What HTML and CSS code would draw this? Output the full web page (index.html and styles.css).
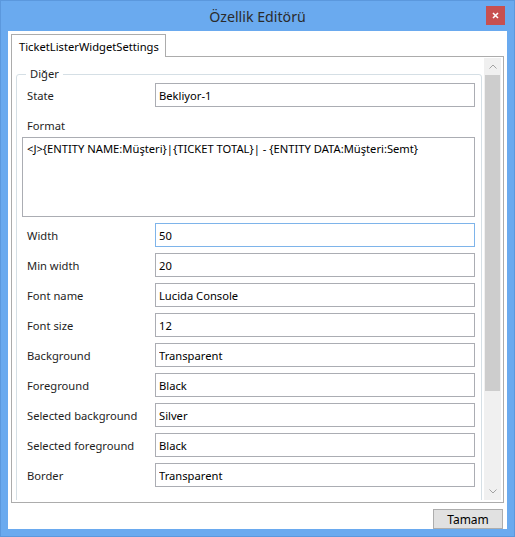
FILE: index.html
```html
<!DOCTYPE html>
<html lang="tr">

<head>
    <meta charset="UTF-8">
    <title>Özellik Editörü</title>
    <link rel="stylesheet" href="styles.css">
</head>

<body>
    <div class="window">
        <div class="titlebar">
            <span></span>
            <span class="title">Özellik Editörü</span>
            <button class="close">
                <svg width="7" height="7" viewBox="0 0 7 7"><path d="M1 1 L6 6 M6 1 L1 6" stroke="#fff" stroke-width="1.6" /></svg>
            </button>
        </div>

        <div class="client">
            <!-- Tabs -->
            <div class="tabs">
                <div class="tab active">TicketListerWidgetSettings</div>
            </div>

            <div class="tab-panel">
                <div class="scroll-content">
                    <fieldset class="group">
                        <legend>Diğer</legend>

                        <label>State</label>
                        <input type="text" value="Bekliyor-1">

                        <label class="wide">Format</label>
                        <textarea class="wide">&lt;J&gt;{ENTITY NAME:Müşteri}|{TICKET TOTAL}| - {ENTITY DATA:Müşteri:Semt}</textarea>

                        <label>Width</label>
                        <input type="text" value="50" class="focused">

                        <label>Min width</label>
                        <input type="text" value="20">

                        <label>Font name</label>
                        <input type="text" value="Lucida Console">

                        <label>Font size</label>
                        <input type="text" value="12">

                        <label>Background</label>
                        <input type="text" value="Transparent">

                        <label>Foreground</label>
                        <input type="text" value="Black">

                        <label>Selected background</label>
                        <input type="text" value="Silver">

                        <label>Selected foreground</label>
                        <input type="text" value="Black">

                        <label>Border</label>
                        <input type="text" value="Transparent">
                    </fieldset>
                </div>

                <!-- Vertical scrollbar -->
                <div class="scrollbar">
                    <div class="arrow">
                        <svg width="8" height="5" viewBox="0 0 8 5"><path d="M0.5 4.5 L4 1 L7.5 4.5" fill="none" stroke="#a2a2a2" /></svg>
                    </div>
                    <div class="track">
                        <div class="thumb"></div>
                    </div>
                    <div class="arrow">
                        <svg width="8" height="5" viewBox="0 0 8 5"><path d="M0.5 0.5 L4 4 L7.5 0.5" fill="none" stroke="#a2a2a2" /></svg>
                    </div>
                </div>
            </div>

            <div class="footer">
                <button class="btn">Tamam</button>
            </div>
        </div>
    </div>
</body>

</html>
```

FILE: styles.css
```css
body {
    margin: 0;
    font-family: "Segoe UI", "Noto Sans", sans-serif;
    font-size: 11.2px;
    color: #1e1e1e;
}

.window {
    width: 515px;
    height: 537px;
    box-sizing: border-box;
    background: #6aaaef;
    border: 1px solid #5b98dd;
    padding: 0 7px 7px;
    display: flex;
    flex-direction: column;
}

.titlebar {
    height: 30px;
    display: grid;
    grid-template-columns: 1fr auto 1fr;
    align-items: center;
}

.title {
    font-size: 14.2px;
    color: #2b2b2b;
}

.close {
    justify-self: end;
    align-self: start;
    width: 19px;
    height: 19px;
    margin: 5px 2px 0 0;
    padding: 0;
    border: none;
    background: #c75050;
    display: flex;
    align-items: center;
    justify-content: center;
}

.client {
    flex: 1;
    background: #fff;
    display: flex;
    flex-direction: column;
    padding: 3px 3px 0 3px;
}

.tabs {
    height: 22px;
    display: flex;
}

.tab {
    position: relative;
    z-index: 1;
    height: 22px;
    padding: 0 6px 0 7px;
    line-height: 23px;
    border: 1px solid #acacac;
    border-bottom: none;
    background: #fff;
    color: #000;
}

.tab-panel {
    height: 442px;
    border: 1px solid #acacac;
    padding: 1px 2px 2px 2px;
    display: flex;
    overflow: hidden;
}

.scroll-content {
    flex: 1;
    overflow: hidden;
    padding: 8px 2px 0 2px;
}

.group {
    margin: 0;
    border: 1px solid #d5dfe5;
    border-radius: 3px;
    padding: 1px 6px 40px 5px;
    display: grid;
    grid-template-columns: 133px 1fr;
    row-gap: 6px;
}

.group legend {
    padding: 0 4px;
    margin-left: 4px;
    line-height: 16px;
}

.group label {
    height: 24px;
    line-height: 26px;
    padding-left: 5px;
}

.group .wide {
    grid-column: 1 / 3;
}

.group input,
.group textarea {
    font-family: inherit;
    font-size: 11.2px;
    color: #000;
    border: 1px solid #abadb3;
    box-sizing: border-box;
    margin: 0;
    outline: none;
}

.group input {
    height: 24px;
    padding: 1px 3px 0;
}

.group textarea {
    height: 80px;
    padding: 3px 4px;
    resize: none;
    overflow: hidden;
    margin-top: -6px;
}

.group input.focused {
    border-color: #7eb4ea;
}

.scrollbar {
    width: 17px;
    background: #f0f0f0;
    display: flex;
    flex-direction: column;
}

.arrow {
    height: 17px;
    display: flex;
    align-items: center;
    justify-content: center;
}

.track {
    flex: 1;
    padding: 0 1px;
}

.thumb {
    height: 316px;
    background: #cdcdcd;
}

.footer {
    flex: 1;
    display: flex;
    justify-content: flex-end;
    align-items: flex-start;
}

.btn {
    margin-top: 6px;
    margin-right: 1px;
    width: 70px;
    height: 20px;
    padding: 0;
    font-family: inherit;
    font-size: 12px;
    color: #000;
    background: #e1e1e1;
    border: 1px solid #adadad;
}
```
